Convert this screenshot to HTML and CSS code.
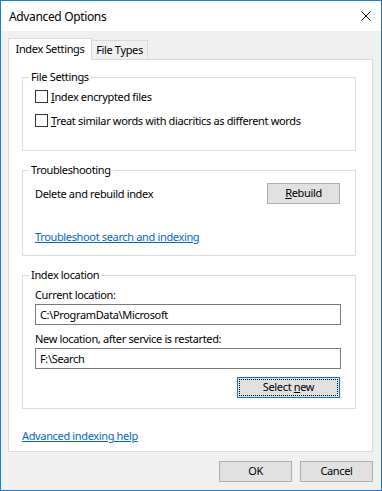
FILE: index.html
```html
<!DOCTYPE html>
<html>
<head>
<meta charset="utf-8">
<link rel="stylesheet" href="styles.css">
</head>
<body>
<div class="window">
  <div class="titlebar">
    <span class="title">Advanced Options</span>
    <svg class="close" width="10" height="10" viewBox="0 0 10 10"><path d="M0.5 0.5 L9.5 9.5 M9.5 0.5 L0.5 9.5" stroke="#111" stroke-width="1" fill="none"/></svg>
  </div>
  <div class="body">
    <div class="tabs">
      <div class="tab active">Index Settings</div>
      <div class="tab">File Types</div>
    </div>
    <div class="page">
      <fieldset class="group g1">
        <legend>File Settings</legend>
        <label class="check"><span class="box"></span><span><u>I</u>ndex encrypted files</span></label>
        <label class="check second"><span class="box"></span><span><u>T</u>reat similar words with diacritics as different words</span></label>
      </fieldset>
      <fieldset class="group g2">
        <legend>Troubleshooting</legend>
        <div class="row">
          <span>Delete and rebuild index</span>
          <button class="btn"><u>R</u>ebuild</button>
        </div>
        <a class="link trouble" href="#">Troubleshoot search and indexing</a>
      </fieldset>
      <fieldset class="group g3">
        <legend>Index location</legend>
        <div class="label first">Current location:</div>
        <div class="input">C:\ProgramData\Microsoft</div>
        <div class="label">New location, after service is restarted:</div>
        <div class="input">F:\Search</div>
        <div class="row end">
          <button class="btn wide focus">Select <u>n</u>ew</button>
        </div>
      </fieldset>
      <a class="link help" href="#">Advanced indexing help</a>
    </div>
    <div class="footer">
      <button class="btn">OK</button>
      <button class="btn">Cancel</button>
    </div>
  </div>
</div>
</body>
</html>
```
FILE: styles.css
```css
* { box-sizing: border-box; }
html, body { margin: 0; padding: 0; background: #fff; }
body {
  font-family: "Noto Sans", "Open Sans", sans-serif;
  font-size: 11px;
  letter-spacing: -0.35px;
  color: #000;
}
.window {
  width: 382px;
  height: 491px;
  border: 1px solid #1a7fd4;
  background: #f0f0f0;
  display: flex;
  flex-direction: column;
}
.titlebar {
  height: 30px;
  background: #fff;
  display: flex;
  align-items: center;
  justify-content: space-between;
  padding: 0 10px 0 8px;
  flex: none;
}
.title { font-size: 12px; color: #000; padding-top: 1px; }
.close { display: block; }
.body {
  padding: 7px 8px 0 7px;
  display: flex;
  flex-direction: column;
}
.tabs {
  height: 21px;
  display: flex;
  align-items: flex-end;
}
.tab {
  height: 19px;
  width: 56px;
  border: 1px solid #d9d9d9;
  border-bottom: none;
  border-left: none;
  background: #f0f0f0;
  display: flex;
  align-items: center;
  justify-content: center;
  line-height: 16px;
}
.tab.active {
  height: 22px;
  width: 84px;
  border-left: 1px solid #d9d9d9;
  background: #fff;
  margin-bottom: -1px;
  position: relative;
  z-index: 1;
  padding-bottom: 2px;
}
.page {
  width: 365px;
  height: 393px;
  border: 1px solid #d9d9d9;
  background: #fff;
  padding: 0 16px 0 13px;
  display: flex;
  flex-direction: column;
  align-items: flex-start;
}
.group {
  width: 334px;
  margin: 11px 0 0;
  padding: 0 15px 0 12px;
  border: 1px solid #dcdcdc;
  min-width: 0;
  display: flex;
  flex-direction: column;
}
.group legend {
  margin-left: -6px;
  padding: 0 2px;
  line-height: 16px;
}
.g1 { margin-top: 9px; padding-top: 3px; padding-bottom: 21px; }
.g2 { padding-top: 5px; padding-bottom: 10px; }
.g3 { padding-top: 2px; padding-bottom: 10px; }
.check {
  display: flex;
  align-items: center;
  height: 17px;
  line-height: 16px;
}
.check.second { margin-top: 7px; }
.box {
  width: 13px;
  height: 13px;
  border: 1px solid #333;
  background: #fff;
  margin-right: 3px;
  flex: none;
}
.row {
  display: flex;
  align-items: center;
  justify-content: space-between;
  height: 21px;
}
.row.end { justify-content: flex-end; margin-top: 8px; }
.btn {
  font-family: inherit;
  font-size: 11px;
  letter-spacing: -0.35px;
  color: #000;
  width: 73px;
  height: 21px;
  border: 1px solid #adadad;
  background: #e1e1e1;
  padding: 0 0 1px;
  line-height: 16px;
}
.btn.wide { width: 103px; }
.btn.focus {
  border-color: #0078d7;
  outline: 1px dotted #000;
  outline-offset: -3px;
}
.link {
  color: #0066cc;
  text-decoration: underline;
  line-height: 16px;
}
.trouble { margin-top: 25px; align-self: flex-start; }
.label { line-height: 16px; margin-top: 6px; }
.label.first { margin-top: 2px; }
.input {
  width: 306px;
  height: 21px;
  margin-top: 1px;
  border: 1px solid #7a7a7a;
  background: #fff;
  padding: 0 4px;
  line-height: 19px;
}
.help { margin-top: 19px; }
.footer {
  display: flex;
  justify-content: flex-end;
  gap: 8px;
  margin-top: 9px;
}
```
